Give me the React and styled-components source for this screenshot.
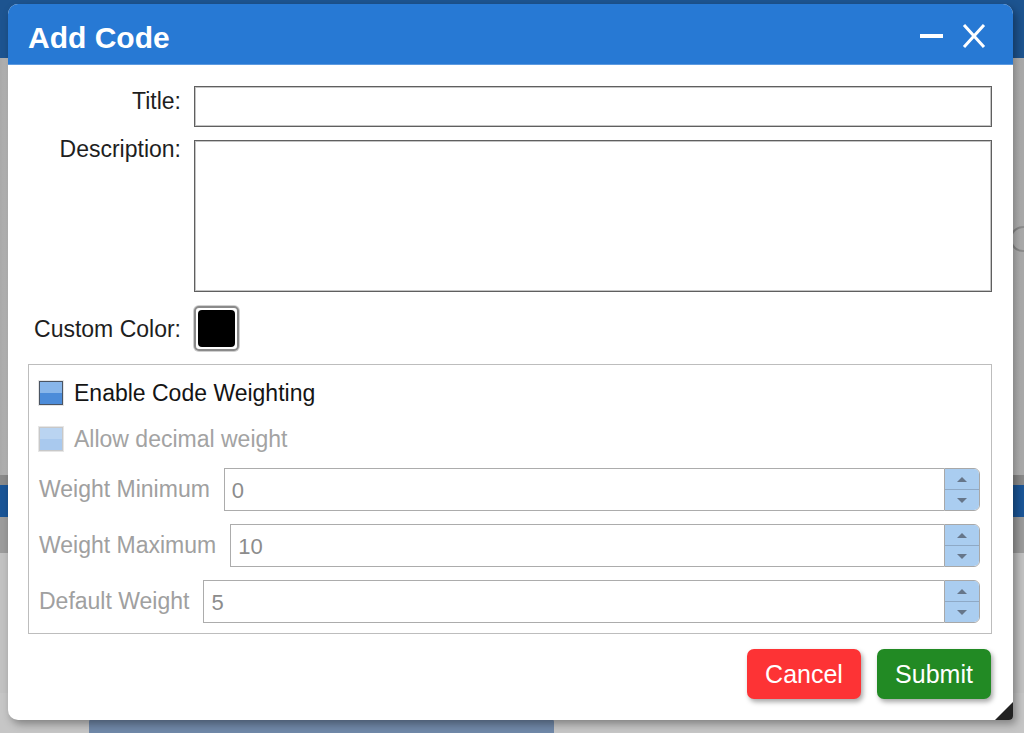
import React from 'react';
import styled, { createGlobalStyle } from 'styled-components';

const GlobalStyle = createGlobalStyle`
  html, body {
    margin: 0;
    padding: 0;
  }
  body {
    font-family: 'Liberation Sans', Arial, sans-serif;
    background: #b2b2b2;
  }
`;

const Page = styled.div`
  position: relative;
  width: 1024px;
  height: 733px;
  overflow: hidden;
  display: flex;
  flex-direction: column;
  background: linear-gradient(90deg, #a9a9a9 0%, #bdbdbd 1%, #bdbdbd 99%, #a9a9a9 100%);
`;

const BackHeader = styled.div`
  flex: 0 0 58px;
  background: #1d5490;
  padding-left: 14px;
  overflow: hidden;
`;

const BackTitle = styled.div`
  margin-top: -27px;
  color: #c9d6e6;
  font-size: 30px;
  font-weight: bold;
`;

const BackFill = styled.div`
  flex: ${(p) => (p.$grow ? '1 1 0' : `0 0 ${p.$h}`)};
  background: ${(p) => p.$bg};
`;

const BackBottom = styled.div`
  flex: 0 0 40px;
  display: flex;
  align-items: flex-end;
  padding-left: 89px;
  background: #c6c6c6;
`;

const BackButton = styled.div`
  width: 465px;
  height: 14px;
  background: #7088a8;
  border-radius: 3px 3px 0 0;
`;

const BackRing = styled.div`
  position: absolute;
  top: 226px;
  left: 1010px;
  width: 22px;
  height: 22px;
  border: 2px solid #8f8f8f;
  border-radius: 50%;
`;

const Dialog = styled.div`
  position: absolute;
  top: 4px;
  left: 8px;
  width: 1005px;
  background: #fff;
  border-radius: 10px 10px 4px 10px;
  box-shadow: 3px 4px 8px rgba(0, 0, 0, 0.35);
  overflow: hidden;
`;

const TitleBar = styled.div`
  height: 61px;
  background: #2779d4;
  display: flex;
  align-items: center;
  justify-content: space-between;
  padding: 4px 27px 0 20px;
  border-bottom: 1px solid #5d9ae0;
  box-sizing: border-box;
`;

const DialogTitle = styled.h1`
  margin: 4px 0 0;
  color: #fff;
  font-size: 30px;
  font-weight: bold;
`;

const TitleIcons = styled.div`
  display: flex;
  align-items: center;
  gap: 18px;
`;

const Body = styled.div`
  display: flex;
  flex-direction: column;
  padding: 21px 21px 21px 20px;
`;

const FormRow = styled.div`
  display: grid;
  grid-template-columns: 153px 1fr;
  column-gap: 13px;
  align-items: ${(p) => p.$align || 'start'};
  margin-bottom: ${(p) => p.$mb || 0}px;
`;

const Label = styled.label`
  text-align: right;
  font-size: 23px;
  line-height: 26px;
  color: #1e1e1e;
  white-space: nowrap;
  margin-top: ${(p) => p.$mt || 0}px;
`;

const TextInput = styled.input`
  height: 41px;
  box-sizing: border-box;
  border: 1px solid #5f5f5f;
  box-shadow: inset 0 0 0 1px #c4c4c4;
  font-size: 20px;
  font-family: inherit;
  padding: 0 8px;
  outline: none;
`;

const TextArea = styled.textarea`
  height: 152px;
  box-sizing: border-box;
  border: 1px solid #5f5f5f;
  box-shadow: inset 0 0 0 1px #c4c4c4;
  resize: none;
  font-size: 20px;
  font-family: inherit;
  padding: 6px 8px;
  outline: none;
`;

const Swatch = styled.div`
  width: 45px;
  height: 45px;
  box-sizing: border-box;
  border: 2px solid #8a8a8a;
  border-radius: 5px;
  padding: 2px;
  background: #fff;
  box-shadow: 0 0 0 1px #cfcfcf;
`;

const SwatchFill = styled.div`
  width: 100%;
  height: 100%;
  background: #000;
  border-radius: 4px;
`;

const Group = styled.fieldset`
  margin: 0;
  height: 270px;
  box-sizing: border-box;
  border: 1px solid #bdbdbd;
  padding: 16px 11px 10px 10px;
  display: flex;
  flex-direction: column;
`;

const CheckRow = styled.div`
  display: flex;
  align-items: center;
  gap: 11px;
  height: 24px;
  margin-bottom: ${(p) => p.$mb || 0}px;
  font-size: 23px;
  color: ${(p) => (p.$disabled ? '#a3a3a3' : '#141414')};
`;

const CheckBox = styled.span`
  flex: 0 0 24px;
  height: 24px;
  box-sizing: border-box;
  border: 1px solid ${(p) => (p.$disabled ? '#c8c8c8' : '#4a5462')};
  background: ${(p) =>
    p.$disabled
      ? 'linear-gradient(#bad4f1 0 50%, #a9c9ee 50% 100%)'
      : 'linear-gradient(#88b6ea 0 50%, #4c8cd9 50% 100%)'};
  box-shadow: 0 0 0 1px #e6e6e6;
`;

const WeightRow = styled.div`
  display: flex;
  align-items: center;
  height: 43px;
  margin-bottom: ${(p) => p.$mb || 0}px;
`;

const WeightLabel = styled.span`
  font-size: 23px;
  color: #a0a0a0;
  margin-right: 14px;
  white-space: nowrap;
`;

const Spinner = styled.div`
  flex: 1;
  height: 43px;
  display: flex;
`;

const SpinInput = styled.input`
  flex: 1;
  min-width: 0;
  box-sizing: border-box;
  border: 1px solid #acacac;
  border-right: none;
  font-size: 22px;
  font-family: inherit;
  color: #8c8c8c;
  padding: 2px 7px 0;
  outline: none;
`;

const SpinButtons = styled.div`
  width: 36px;
  display: flex;
  flex-direction: column;
  border: 1px solid #a8a8a8;
  border-radius: 0 6px 6px 0;
  overflow: hidden;
  box-sizing: border-box;
`;

const SpinButton = styled.div`
  flex: 1;
  display: flex;
  align-items: center;
  justify-content: center;
  background: #aacdf0;
  border-top: ${(p) => (p.$lower ? '1px solid #8ea9c6' : 'none')};
`;

const Actions = styled.div`
  display: flex;
  justify-content: flex-end;
  gap: 16px;
  margin-top: 15px;
  padding-right: 1px;
`;

const ActionButton = styled.button`
  width: 114px;
  height: 50px;
  border: none;
  border-radius: 7px;
  background: ${(p) => p.$bg};
  color: #fff;
  font-family: inherit;
  font-size: 25px;
  box-shadow: 2px 3px 5px rgba(0, 0, 0, 0.35);
  cursor: pointer;
`;

const Grip = styled.div`
  position: absolute;
  right: 0;
  bottom: 0;
  width: 0;
  height: 0;
  border-left: 18px solid transparent;
  border-bottom: 18px solid #222;
`;

const Arrow = ({ up }) => (
  <svg width="12" height="7" viewBox="0 0 12 7">
    {up ? (
      <path d="M1 6 L6 1 L11 6 Z" fill="#66768a" />
    ) : (
      <path d="M1 1 L11 1 L6 6 Z" fill="#66768a" />
    )}
  </svg>
);

const NumberField = ({ value }) => (
  <Spinner>
    <SpinInput defaultValue={value} />
    <SpinButtons>
      <SpinButton>
        <Arrow up />
      </SpinButton>
      <SpinButton $lower>
        <Arrow />
      </SpinButton>
    </SpinButtons>
  </Spinner>
);

const weights = [
  { label: 'Weight Minimum', value: '0' },
  { label: 'Weight Maximum', value: '10' },
  { label: 'Default Weight', value: '5' },
];

export default function App() {
  return (
    <>
      <GlobalStyle />
      <Page>
        <BackHeader>
          <BackTitle>Code Count Media</BackTitle>
        </BackHeader>
        <BackFill $grow={1} $bg="transparent" />
        <BackFill $h="10px" $bg="#8a8a8a" />
        <BackFill $h="32px" $bg="#1a5597" />
        <BackFill $h="36px" $bg="#9c9c9c" />
        <BackFill $h="140px" $bg="#c2c2c2" />
        <BackBottom>
          <BackButton />
        </BackBottom>
        <BackRing />

        <Dialog>
          <TitleBar>
            <DialogTitle>Add Code</DialogTitle>
            <TitleIcons>
              <svg width="24" height="24" viewBox="0 0 24 24">
                <rect x="0" y="10" width="23" height="4" fill="#fff" />
              </svg>
              <svg width="24" height="24" viewBox="0 0 24 24">
                <path d="M2 1 L22 23 M22 1 L2 23" stroke="#fff" strokeWidth="3" />
              </svg>
            </TitleIcons>
          </TitleBar>
          <Body>
            <FormRow $mb={13}>
              <Label $mt={2}>Title:</Label>
              <TextInput />
            </FormRow>
            <FormRow $mb={14}>
              <Label $mt={-4}>Description:</Label>
              <TextArea />
            </FormRow>
            <FormRow $align="center" $mb={13}>
              <Label>Custom Color:</Label>
              <Swatch>
                <SwatchFill />
              </Swatch>
            </FormRow>
            <Group>
              <CheckRow $mb={22}>
                <CheckBox />
                Enable Code Weighting
              </CheckRow>
              <CheckRow $mb={17} $disabled>
                <CheckBox $disabled />
                Allow decimal weight
              </CheckRow>
              {weights.map((w, i) => (
                <WeightRow key={w.label} $mb={i < weights.length - 1 ? 13 : 0}>
                  <WeightLabel>{w.label}</WeightLabel>
                  <NumberField value={w.value} />
                </WeightRow>
              ))}
            </Group>
            <Actions>
              <ActionButton $bg="#fd3335">Cancel</ActionButton>
              <ActionButton $bg="#228a24">Submit</ActionButton>
            </Actions>
          </Body>
          <Grip />
        </Dialog>
      </Page>
    </>
  );
}
